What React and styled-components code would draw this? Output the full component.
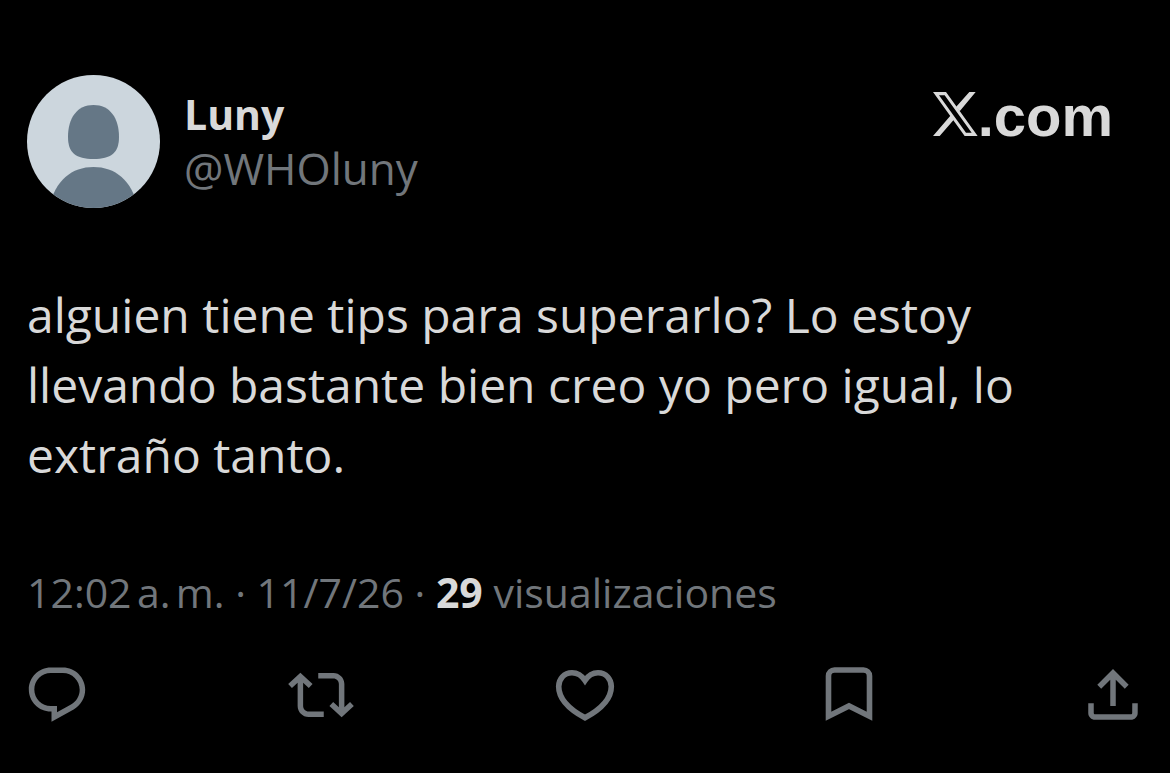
import styled, { createGlobalStyle } from "styled-components"

const GlobalStyle = createGlobalStyle`
    body {
        margin: 0;
        background: #000;
        color: #d9d9d9;
        font-family: 'Open Sans', 'Noto Sans', sans-serif;
    }
`
const Post = styled.article`
    padding: 75px 24px 40px 27px;
`
const Header = styled.header`
    display: flex;
    align-items: flex-start;
`
const Avatar = styled.svg`
    width: 133px;
    height: 133px;
    flex-shrink: 0;
    border-radius: 50%;
    background: #ccd6dd;
`
const Author = styled.a`
    display: flex;
    flex-direction: column;
    margin: 12px auto 0 24px;
    line-height: 54px;
    font-size: 44px;
    color: #71767b;
    text-decoration: none;
`
const Name = styled.strong`
    font-size: 41px;
    color: #d9d9d9;
`
const Brand = styled.a`
    display: flex;
    align-items: baseline;
    margin: 9px 33px 0 0;
    font-family: 'Liberation Sans', Arial, sans-serif;
    font-size: 58px;
    font-weight: 700;
    line-height: 64px;
    color: #d9d9d9;
    text-decoration: none;
`
const Text = styled.p`
    margin: 72px 60px 0 0;
    font-size: 48px;
    line-height: 70px;
`
const Meta = styled.p`
    margin: 75px 0 0;
    font-size: 41px;
    line-height: 54px;
    color: #71767b;

    strong {
        color: #d9d9d9;
    }
`
const Actions = styled.div`
    display: flex;
    justify-content: space-between;
    margin: 43px 0 0 -3px;
`
const ActionButton = styled.button`
    display: flex;
    padding: 0;
    border: none;
    background: none;
    color: #71767b;
    cursor: pointer;
`
const Icon = styled.svg`
    width: 66px;
    height: 66px;
    fill: ${props => props.$outline ? 'none' : 'currentColor'};
    stroke: ${props => props.$outline ? 'currentColor' : 'none'};
    stroke-width: 5.6;
`

const XLogo = () => (
    <svg width="45" height="44" viewBox="0 0 135 132" fill="currentColor" aria-hidden="true">
        <path fillRule="evenodd" d="M0 0H39L134 132H95ZM18 10L99 122H116L35 10Z"/>
        <path d="M109 0H128L80 58L69 45ZM0 132H20L65 80L56 67Z"/>
    </svg>
)

const actions = [
    {
        label: 'Responder',
        path: 'M1.751 10c0-4.42 3.584-8 8.005-8h4.366c4.49 0 8.129 3.64 8.129 8.13 0 2.96-1.607 5.68-4.196 7.11l-8.054 4.46v-3.69h-.067c-4.49.1-8.183-3.51-8.183-8.01zm8.005-6c-3.317 0-6.005 2.69-6.005 6 0 3.37 2.77 6.08 6.138 6.01l.351-.01h1.761v2.3l5.087-2.81c1.951-1.08 3.163-3.13 3.163-5.36 0-3.39-2.744-6.13-6.129-6.13H9.756z',
    },
    {
        label: 'Repostear',
        path: 'M4.5 3.88l4.432 4.14-1.364 1.46L5.5 7.55V16c0 1.1.896 2 2 2H13v2H7.5c-2.209 0-4-1.79-4-4V7.55L1.432 9.48.068 8.02 4.5 3.88zM16.5 6H11V4h5.5c2.209 0 4 1.79 4 4v8.45l2.068-1.93 1.364 1.46-4.432 4.14-4.432-4.14 1.364-1.46 2.068 1.93V8c0-1.1-.896-2-2-2z',
    },
    {
        label: 'Me gusta',
        outline: true,
        path: 'M33 18.5C29 12.5 24.5 10.8 20 10.8C12 10.8 6.7 17 6.7 24.5C6.7 37 17.5 47.5 33 55.8C48.5 47.5 59.3 37 59.3 24.5C59.3 17 54 10.8 46 10.8C41.5 10.8 37 12.5 33 18.5Z',
    },
    {
        label: 'Guardar',
        outline: true,
        path: 'M12.5 54.3V14a6 6 0 0 1 6-6h29a6 6 0 0 1 6 6v40.3L33 44Z',
    },
    {
        label: 'Compartir',
        path: 'M12 2.59l5.7 5.7-1.41 1.42L13 6.41V16h-2V6.41l-3.3 3.3-1.41-1.42L12 2.59zM21 15l-.02 3.51c0 1.38-1.12 2.49-2.5 2.49H5.5C4.11 21 3 19.88 3 18.5V15h2v3.5c0 .28.22.5.5.5h12.98c.28 0 .5-.22.5-.5L19 15h2z',
    },
]

const App = () => (
    <>
        <GlobalStyle/>
        <Post>
            <Header>
                <Avatar viewBox="0 0 133 133" fill="#657786" aria-hidden="true">
                    <path d="M66.5 30C83 30 92 43 92 62C92 78 84 84 66.5 84C49 84 41 78 41 62C41 43 50 30 66.5 30Z"/>
                    <path d="M22 133C28 105 45 92 66.5 92C88 92 105 105 111 133Z"/>
                </Avatar>
                <Author href="#perfil">
                    <Name>Luny</Name>
                    <span>@WHOluny</span>
                </Author>
                <Brand href="#inicio">
                    <XLogo/>
                    <span>.com</span>
                </Brand>
            </Header>
            <Text>
                alguien tiene tips para superarlo? Lo estoy llevando bastante bien creo yo pero igual, lo extraño tanto.
            </Text>
            <Meta>
                12:02{'\u202f'}a.{'\u202f'}m. · 11/7/26 · <strong>29</strong> visualizaciones
            </Meta>
            <Actions>
                {actions.map(({ label, path, outline }) => (
                    <ActionButton key={label} type="button" aria-label={label}>
                        <Icon viewBox={outline ? '0 0 66 66' : '0 0 24 24'} $outline={outline}>
                            <path d={path}/>
                        </Icon>
                    </ActionButton>
                ))}
            </Actions>
        </Post>
    </>
)

export default App
